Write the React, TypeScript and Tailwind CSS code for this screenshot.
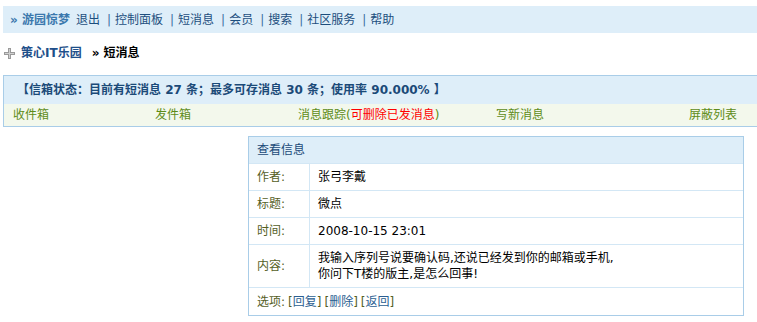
import React from 'react';

const navLinks = ['控制面板', '短消息', '会员', '搜索', '社区服务', '帮助'];

const rows: { label: string; value: React.ReactNode; tall?: boolean }[] = [
  { label: '作者:', value: '张弓李戴' },
  { label: '标题:', value: '微点' },
  { label: '时间:', value: '2008-10-15 23:01' },
  {
    label: '内容:',
    value: (
      <>
        我输入序列号说要确认码,还说已经发到你的邮箱或手机,
        <br />
        你问下T楼的版主,是怎么回事!
      </>
    ),
    tall: true,
  },
];

const App: React.FC = () => {
  return (
    <div className="w-[757px] h-[322px] bg-white text-[12px] leading-[16px] font-['DejaVu_Sans','Noto_Sans_CJK_SC',sans-serif] overflow-hidden">
      {/* Top nav */}
      <div className="mt-[6px] ml-[3px] h-[27px] bg-[#deeef9] flex items-center pl-[7px] text-[#1d4e7e]">
        <span className="font-bold text-[#3b78ad]">» 游园惊梦</span>
        <span className="ml-[6px]">退出</span>
        {navLinks.map((l) => (
          <React.Fragment key={l}>
            <span className="ml-[7px] mr-[4px] text-[#3b6ea0]">|</span>
            <span>{l}</span>
          </React.Fragment>
        ))}
      </div>

      {/* Breadcrumb */}
      <div className="mt-[12px] ml-[4px] flex items-center h-[16px]">
        <svg width="11" height="11" viewBox="0 0 11 11" className="mr-[6px]">
          <rect x="4" y="0" width="3" height="11" fill="#9a9a9a" />
          <rect x="0" y="4" width="11" height="3" fill="#9a9a9a" />
          <rect x="5" y="1" width="1" height="9" fill="#d0d0d0" />
          <rect x="1" y="5" width="9" height="1" fill="#d0d0d0" />
        </svg>
        <span className="font-bold text-[#1e4f8a]">策心IT乐园</span>
        <span className="font-bold text-black ml-[10px]">» 短消息</span>
      </div>

      {/* Status box */}
      <div className="mt-[14px] ml-[3px] border border-[#a9cde8] border-r-0">
        <div className="h-[28px] bg-[#deeef9] flex items-center pl-[13px] text-[#1b4a78] font-bold">
          【信箱状态：目前有短消息 27 条；最多可存消息 30 条；使用率 90.000% 】
        </div>
        <div className="h-[22px] bg-[#f3f8ec] flex items-center text-[#5e8c17]">
          <div className="w-[142px] pl-[9px]">收件箱</div>
          <div className="w-[143px] pl-[9px]">发件箱</div>
          <div className="w-[198px] pl-[9px]">
            消息跟踪(<span className="text-[#ff0000]">可删除已发消息</span>)
          </div>
          <div className="w-[193px] pl-[9px]">写新消息</div>
          <div className="pl-[9px]">屏蔽列表</div>
        </div>
      </div>

      {/* Message box */}
      <div className="mt-[9px] ml-[248px] w-[496px] border border-[#a9cde8]">
        <div className="h-[26px] bg-[#deeef9] flex items-center pl-[8px] text-[#1b4a78]">查看信息</div>
        {rows.map((r) => (
          <div
            key={r.label}
            className={`flex border-t border-[#d3e7f5] ${r.tall ? 'h-[43px]' : 'h-[27px]'}`}
          >
            <div className="w-[61px] border-r border-[#d3e7f5] flex items-center pl-[8px] text-[#55601f]">
              {r.label}
            </div>
            <div className="flex-1 flex items-center pl-[8px] text-black">
              <div>{r.value}</div>
            </div>
          </div>
        ))}
        <div className="h-[28px] border-t border-[#d3e7f5] flex items-center pl-[8px] text-[#55601f]">
          选项: <span className="ml-[3px]">[<span className="text-[#2b5e91]">回复</span>]</span>
          <span className="ml-[3px]">[<span className="text-[#2b5e91]">删除</span>]</span>
          <span className="ml-[3px]">[<span className="text-[#2b5e91]">返回</span>]</span>
        </div>
      </div>
    </div>
  );
};

export default App;
